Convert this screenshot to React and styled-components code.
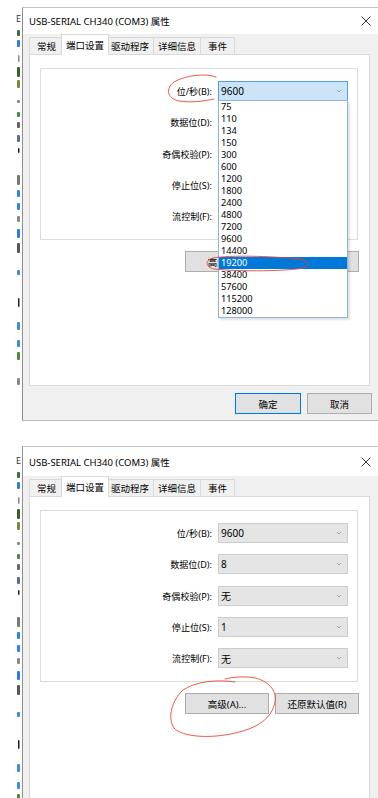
import React from "react";
import styled, { createGlobalStyle } from "styled-components";

const GlobalStyle = createGlobalStyle`
  html, body { margin: 0; padding: 0; background: #fff; }
  body {
    font-family: "Noto Sans", "Noto Sans CJK SC", sans-serif;
    font-size: 9.5px;
    color: #000;
  }
  * { box-sizing: border-box; }
`;

const Page = styled.div`
  position: relative;
  width: 378px;
  height: 798px;
  overflow: hidden;
  background: #fff;
  padding-top: 7px;
`;

const Shot = styled.div`
  display: flex;
  height: ${(p) => p.h}px;
  margin-top: ${(p) => p.gap || 0}px;
`;

const Strip = styled.div`
  width: 22px;
  flex: none;
`;

const Window = styled.div`
  flex: 1;
  min-width: 0;
  display: flex;
  flex-direction: column;
  background: #f0f0f0;
  border-left: 1px solid #8f8f8f;
  border-top: 1px solid #c4c4c4;
  border-bottom: 1px solid #b8b8b8;
`;

const TitleBar = styled.div`
  height: ${(p) => p.h}px;
  flex: none;
  background: #fff;
  display: flex;
  align-items: center;
  justify-content: space-between;
  padding: 0 7px 0 6px;
  font-size: 9.5px;
`;

const TabRow = styled.div`
  height: 20px;
  flex: none;
  display: flex;
  align-items: flex-end;
  padding-left: 6px;
`;

const Tab = styled.div`
  position: relative;
  min-width: 35px;
  height: ${(p) => (p.active ? 21 : 17)}px;
  margin: ${(p) => (p.active ? "0 -2px -1px -3px" : "0 0 0 -1px")};
  padding: 0 4px;
  display: flex;
  align-items: center;
  justify-content: center;
  background: ${(p) => (p.active ? "#fff" : "#f0f0f0")};
  border: 1px solid #d9d9d9;
  border-bottom: none;
  z-index: ${(p) => (p.active ? 1 : 0)};
  &:first-child { margin-left: 0; }
`;

const Pane = styled.div`
  flex: 1;
  margin: 0 8px 0 6px;
  background: #fff;
  border: 1px solid #d9d9d9;
  padding: 13px 11px 0 10px;
`;

const Group = styled.div`
  border: 1px solid #dcdcdc;
  display: grid;
  grid-template-columns: 1fr 130px;
  grid-auto-rows: 20px;
  column-gap: 6px;
  row-gap: 11.25px;
  padding: 12px 9px 13px 0;
`;

const Label = styled.div`
  align-self: center;
  text-align: right;
  white-space: nowrap;
  font-size: 9.1px;
`;

const Combo = styled.div`
  position: relative;
  display: flex;
  align-items: center;
  justify-content: space-between;
  padding: 0 5px 0 2px;
  background: ${(p) => (p.open ? "#cce4f7" : "#e5e5e5")};
  border: 1px solid ${(p) => (p.open ? "#569de5" : "#cccccc")};
  font-size: 10px;
  z-index: ${(p) => (p.open ? 3 : 0)};
  visibility: ${(p) => (p.covered ? "hidden" : "visible")};
`;

const List = styled.div`
  position: absolute;
  top: 100%;
  left: -1px;
  right: -1px;
  background: #fff;
  border: 1px solid #8fb5dc;
  box-shadow: 2px 2px 2px rgba(0, 0, 0, 0.12);
`;

const Item = styled.div`
  height: 12px;
  line-height: 12px;
  padding-left: 2px;
  font-size: 9.2px;
  background: ${(p) => (p.sel ? "#0078d7" : "transparent")};
  color: ${(p) => (p.sel ? "#fff" : "#000")};
`;

const Actions = styled.div`
  display: flex;
  justify-content: flex-end;
  gap: 6px;
  margin: 11px -1px 0 0;
`;

const Button = styled.div`
  width: ${(p) => p.w || 84}px;
  height: 21px;
  display: flex;
  align-items: center;
  justify-content: center;
  background: #e1e1e1;
  border: 1px solid ${(p) => (p.primary ? "#0078d7" : "#adadad")};
  box-shadow: ${(p) => (p.primary ? "inset 0 0 0 1px #cfe4f8" : "none")};
  color: ${(p) => (p.covered ? "transparent" : "#000")};
`;

const Footer = styled.div`
  height: 34px;
  flex: none;
  display: flex;
  justify-content: flex-end;
  gap: 6px;
  padding: 7px 6px 0 0;
`;

const Marks = styled.svg`
  position: absolute;
  left: 0;
  top: 0;
  pointer-events: none;
  z-index: 5;
`;

const baud = [
  "75", "110", "134", "150", "300", "600", "1200", "1800", "2400",
  "4800", "7200", "9600", "14400", "19200", "38400", "57600", "115200", "128000",
];

const rows = [
  ["位/秒(B):", "9600"],
  ["数据位(D):", "8"],
  ["奇偶校验(P):", "无"],
  ["停止位(S):", "1"],
  ["流控制(F):", "无"],
];

const tabs = ["常规", "端口设置", "驱动程序", "详细信息", "事件"];

// bits of desktop icons peeking out left of the dialog
const bits = [
  [23, 6, "#3d6b3a"], [33, 7, "#2f7fd8"], [48, 7, "#8a8a8a", 1], [60, 10, "#3b5e2b"],
  [73, 8, "#7a8a3a"], [93, 3, "#888"], [105, 5, "#4a8a4a"], [115, 6, "#666"],
  [128, 7, "#5a6f8a"], [141, 5, "#222", 1], [168, 10, "#777"], [183, 7, "#2a86e0"],
  [196, 7, "#2a86e0"], [209, 6, "#888"], [222, 9, "#2a7ee0"], [236, 10, "#555"],
  [263, 5, "#3b8de0"], [291, 9, "#222", 1], [315, 8, "#3b8de0"], [333, 7, "#3b8de0"],
  [345, 8, "#4f8a3a"], [371, 7, "#888"],
];

const Icons = ({ dy = 0 }) => (
  <svg width="22" height="414" viewBox="0 0 22 414">
    <text x="16" y={15 + dy} fontSize="9" fill="#333" fontFamily="Noto Sans, sans-serif">E</text>
    {bits.map(([y, h, c, thin], i) => (
      <rect key={i} x={thin ? 18 : 17} y={y + dy} width={thin ? 1.5 : 3} height={h} rx="1" fill={c} />
    ))}
  </svg>
);

const Chevron = () => (
  <svg width="6" height="4" viewBox="0 0 6 4">
    <polyline points="1,1 3,3 5,1" fill="none" stroke="#9a9a9a" strokeWidth="0.9" />
  </svg>
);

const Close = () => (
  <svg width="10" height="10" viewBox="0 0 10 10">
    <path d="M0.5 0.5 L9.5 9.5 M9.5 0.5 L0.5 9.5" stroke="#222" strokeWidth="0.9" />
  </svg>
);

const Dialog = ({ titleH, open, footer }) => (
  <Window>
    <TitleBar h={titleH}>
      <span>USB-SERIAL CH340 (COM3) 属性</span>
      <Close />
    </TitleBar>
    <TabRow>
      {tabs.map((t, i) => (
        <Tab key={t} active={i === 1}>{t}</Tab>
      ))}
    </TabRow>
    <Pane>
      <Group>
        {rows.map(([label, value], i) => (
          <React.Fragment key={label}>
            <Label>{label}</Label>
            <Combo open={open && i === 0} covered={open && i > 0}>
              <span>{value}</span>
              <Chevron />
              {open && i === 0 && (
                <List>
                  {baud.map((b) => (
                    <Item key={b} sel={b === "19200"}>{b}</Item>
                  ))}
                </List>
              )}
            </Combo>
          </React.Fragment>
        ))}
      </Group>
      <Actions>
        <Button>高级(A)...</Button>
        <Button covered={open}>还原默认值(R)</Button>
      </Actions>
    </Pane>
    {footer && (
      <Footer>
        <Button w={66} primary>确定</Button>
        <Button w={65}>取消</Button>
      </Footer>
    )}
  </Window>
);

export default function App() {
  return (
    <Page>
      <GlobalStyle />
      <Shot h={414}>
        <Strip><Icons /></Strip>
        <Dialog titleH={26} open footer />
      </Shot>
      <Shot h={460} gap={25}>
        <Strip><Icons dy={3} /></Strip>
        <Dialog titleH={29} />
      </Shot>
      <Marks width="378" height="798" viewBox="0 0 378 798">
        <g fill="none" stroke="#e8453c" strokeWidth="0.9" strokeLinecap="round">
          <path d="M216 77 C206 73, 186 75, 174 82 C166 88, 166 98, 179 101 C191 103, 205 101, 214 99" />
          <path d="M300 259 C270 256, 230 255, 213 258 C205 260, 205 267, 214 269 C240 272, 290 271, 303 268 C310 266, 310 261, 300 259" />
          <path d="M235 682 C215 679, 195 682, 183 690 C172 700, 167 718, 174 728 C182 737, 210 739, 235 733 C258 728, 272 718, 275 702 C277 690, 268 681, 255 678 C245 676, 232 677, 225 679" />
        </g>
      </Marks>
    </Page>
  );
}
